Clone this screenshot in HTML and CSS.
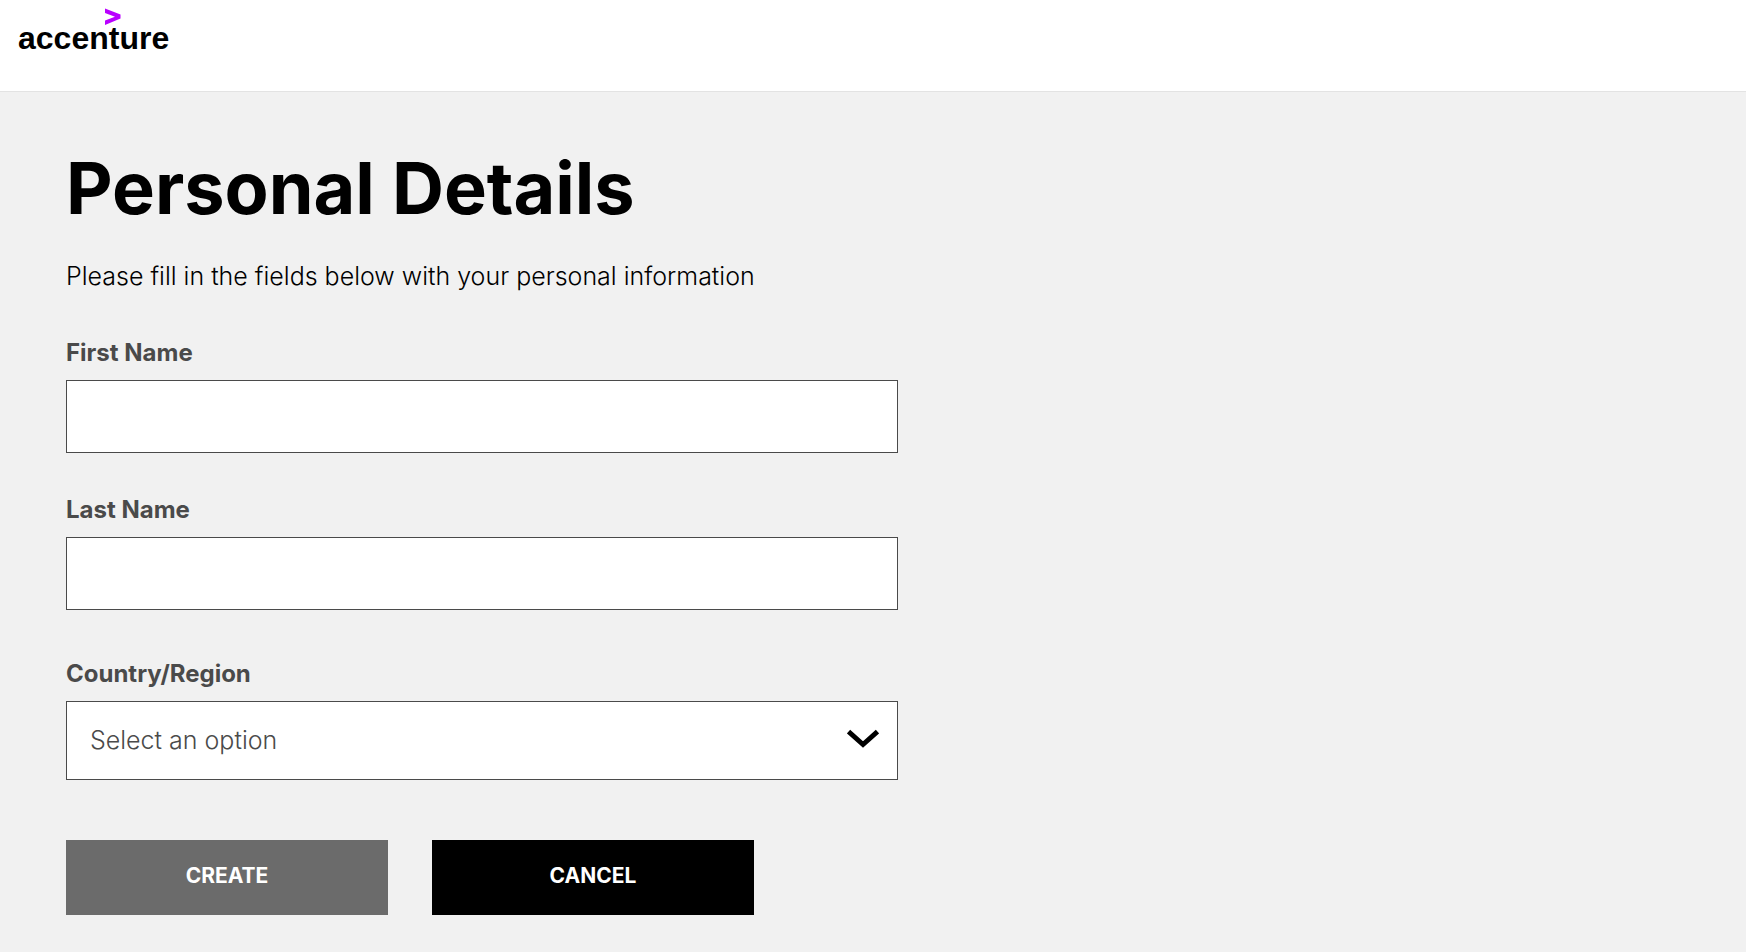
FILE: index.html
```html
<!DOCTYPE html>
<html lang="en">
<head>
    <meta charset="UTF-8">
    <meta name="viewport" content="width=device-width, initial-scale=1">
    <title>Personal Details</title>
    <link rel="stylesheet" href="styles.css">
</head>
<body>
    <header class="header">
        <a class="logo" href="#">
            <svg class="logo-mark" width="16" height="18" viewBox="0 0 16 18" aria-hidden="true">
                <path d="M0 0.5L15.5 6.5V10.5L0 17V12.5L10 8.7L0 5Z" fill="#b900ff"/>
            </svg>
            <span class="logo-text">accenture</span>
        </a>
    </header>

    <main class="content">
        <h1 class="title">Personal Details</h1>
        <p class="intro">Please fill in the fields below with your personal information</p>

        <form class="form">
            <div class="field">
                <label for="firstName">First Name</label>
                <input type="text" id="firstName" name="firstName">
            </div>
            <div class="field">
                <label for="lastName">Last Name</label>
                <input type="text" id="lastName" name="lastName">
            </div>
            <div class="field field-select">
                <label for="country">Country/Region</label>
                <div class="select-wrap">
                    <select id="country" name="country">
                        <option value="">Select an option</option>
                    </select>
                    <svg class="arrow" width="32" height="20" viewBox="0 0 32 20" aria-hidden="true">
                        <path d="M1.5 2.5L16 15.5L30.5 2.5" fill="none" stroke="#000" stroke-width="5"/>
                    </svg>
                </div>
            </div>
            <div class="buttons">
                <button class="btn btn-create" type="submit">CREATE</button>
                <button class="btn btn-cancel" type="button">CANCEL</button>
            </div>
        </form>
    </main>
</body>
</html>
```

FILE: styles.css
```css
* {
    box-sizing: border-box;
}

body {
    margin: 0;
    background-color: #f1f1f1;
    color: #000;
    font-family: Inter, "Liberation Sans", sans-serif;
    font-size: 24px;
}

.header {
    background-color: #fff;
    border-bottom: 1px solid #e3e3e3;
    padding: 8px 18px 41px;
}

.logo {
    display: inline-flex;
    flex-direction: column;
    vertical-align: top;
    color: #000;
    text-decoration: none;
}

.logo-mark {
    margin-left: 87px;
}

.logo-text {
    font-family: "Liberation Sans", Arial, sans-serif;
    font-size: 32px;
    font-weight: bold;
    line-height: 24px;
}

.content {
    padding: 54px 66px 32px;
}

.title {
    margin: 0;
    font-size: 72px;
    font-weight: 700;
    line-height: 84px;
}

.intro {
    margin: 30px 0 45px;
    font-size: 25px;
    font-weight: 300;
    line-height: 32px;
}

.form {
    max-width: 832px;
}

.field {
    display: flex;
    flex-direction: column;
    gap: 11px;
    margin-bottom: 41px;
}

.field label {
    color: #4a4a4a;
    font-weight: 700;
    line-height: 32px;
}

.field input,
.field select {
    width: 100%;
    height: 73px;
    padding: 0 23px;
    border: 1px solid #4a4a4a;
    border-radius: 0;
    background-color: #fff;
    color: #4a4a4a;
    font-family: inherit;
    font-size: 25px;
    font-weight: 300;
}

.field-select {
    margin-top: 48px;
    margin-bottom: 60px;
}

.field select {
    display: block;
    height: 79px;
    padding-bottom: 2px;
    appearance: none;
}

.select-wrap {
    position: relative;
}

.arrow {
    position: absolute;
    right: 19px;
    top: 28px;
    pointer-events: none;
}

.buttons {
    display: flex;
    gap: 44px;
}

.btn {
    width: 322px;
    height: 75px;
    padding: 0 0 4px;
    border: none;
    color: #fff;
    font-family: inherit;
    font-size: 21px;
    font-weight: 700;
    cursor: pointer;
}

.btn-create {
    background-color: #6b6b6b;
}

.btn-cancel {
    background-color: #000;
}
```
